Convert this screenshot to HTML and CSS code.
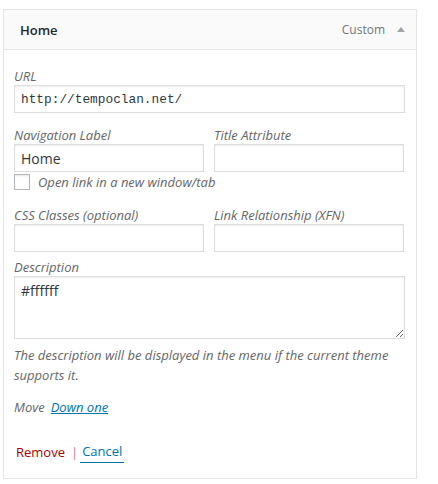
FILE: index.html
```html
<!DOCTYPE html>
<html>
<head>
<meta charset="utf-8">
<link rel="stylesheet" href="styles.css">
</head>
<body>
<div class="panel">
  <div class="head">
    <span class="title">Home</span>
    <span class="type">Custom</span>
    <span class="arrow"></span>
  </div>
  <div class="settings">
    <div class="field url">
      <label class="lbl">URL</label>
      <input class="inp mono" type="text" value="http://tempoclan.net/">
    </div>
    <div class="row two">
      <div class="field">
        <label class="lbl">Navigation Label</label>
        <input class="inp" type="text" value="Home">
      </div>
      <div class="field">
        <label class="lbl">Title Attribute</label>
        <input class="inp" type="text" value="">
      </div>
    </div>
    <label class="check"><span class="box"></span><span class="lbl">Open link in a new window/tab</span></label>
    <div class="row two css">
      <div class="field">
        <label class="lbl">CSS Classes (optional)</label>
        <input class="inp" type="text" value="">
      </div>
      <div class="field">
        <label class="lbl">Link Relationship (XFN)</label>
        <input class="inp" type="text" value="">
      </div>
    </div>
    <div class="field desc">
      <label class="lbl">Description</label>
      <textarea class="inp area">#ffffff</textarea>
      <p class="help">The description will be displayed in the menu if the current theme supports it.</p>
    </div>
    <p class="move"><span class="lbl">Move</span><a class="down" href="#">Down one</a></p>
    <div class="actions">
      <a class="remove" href="#">Remove</a>
      <span class="sep">|</span>
      <a class="cancel" href="#">Cancel</a>
    </div>
  </div>
</div>
</body>
</html>
```
FILE: styles.css
```css
* { box-sizing: border-box; }
body {
  margin: 0;
  background: #fff;
  font-family: "Open Sans", "Liberation Sans", sans-serif;
  font-size: 13px;
  color: #444;
}
.panel {
  margin: 9px 0 0 3px;
  width: 414px;
  border: 1px solid #e5e5e5;
  background: #fff;
  box-shadow: 0 1px 1px rgba(0,0,0,0.04);
}
.head {
  height: 40px;
  background: #fafafa;
  border-bottom: 1px solid #e5e5e5;
  display: flex;
  align-items: center;
  padding: 0 11px 0 16px;
}
.title {
  font-weight: 600;
  font-size: 13px;
  color: #23282d;
  flex: 1;
}
.type {
  font-size: 12px;
  color: #72777c;
  margin-right: 12px;
}
.arrow {
  width: 0;
  height: 0;
  border-left: 4px solid transparent;
  border-right: 4px solid transparent;
  border-bottom: 5px solid #a0a5aa;
  margin-top: -1px;
}
.settings {
  padding: 17px 11px 15px 10px;
}
.field { display: flex; flex-direction: column; }
.lbl {
  font-style: italic;
  color: #666;
  line-height: 18px;
  font-size: 13px;
}
.inp {
  height: 28px;
  border: 1px solid #ddd;
  box-shadow: inset 0 1px 2px rgba(0,0,0,0.07);
  background: #fff;
  padding: 0 6px;
  font-family: "Open Sans", "Liberation Sans", sans-serif;
  font-size: 14px;
  color: #32373c;
  margin: 0;
  outline: none;
}
.mono {
  font-family: "Liberation Mono", "DejaVu Sans Mono", monospace;
  font-size: 12.8px;
  color: #32373c;
}
.row.two {
  display: grid;
  grid-template-columns: 190px 190px;
  column-gap: 10px;
  margin-top: 13px;
}
.check {
  display: flex;
  align-items: center;
  height: 18px;
  margin-top: 1px;
}
.box {
  width: 16px;
  height: 16px;
  border: 1px solid #b4b9be;
  box-shadow: inset 0 1px 2px rgba(0,0,0,0.1);
  background: #fff;
  margin-right: 8px;
}
.row.css { margin-top: 15px; }
.desc { margin-top: 6px; }
.area {
  height: 63px;
  padding: 4px 6px;
  line-height: 20px;
  resize: vertical;
}
.help {
  margin: 6px 0 0;
  font-style: italic;
  color: #666;
  line-height: 20px;
}
.move {
  margin: 12px 0 0;
  line-height: 20px;
}
.down {
  font-style: italic;
  color: #0073aa;
  text-decoration: underline;
  margin-left: 6px;
}
.actions {
  margin-top: 24px;
  display: flex;
  align-items: center;
  line-height: 20px;
  padding-left: 2px;
  font-size: 13px;
}
.remove { color: #a00; text-decoration: none; }
.sep { color: #c77; margin: 0 2px 0 6px; }
.cancel {
  color: #0073aa;
  text-decoration: none;
  border-bottom: 1px solid #0073aa;
  padding: 0 2px 1px 2px;
}
```
